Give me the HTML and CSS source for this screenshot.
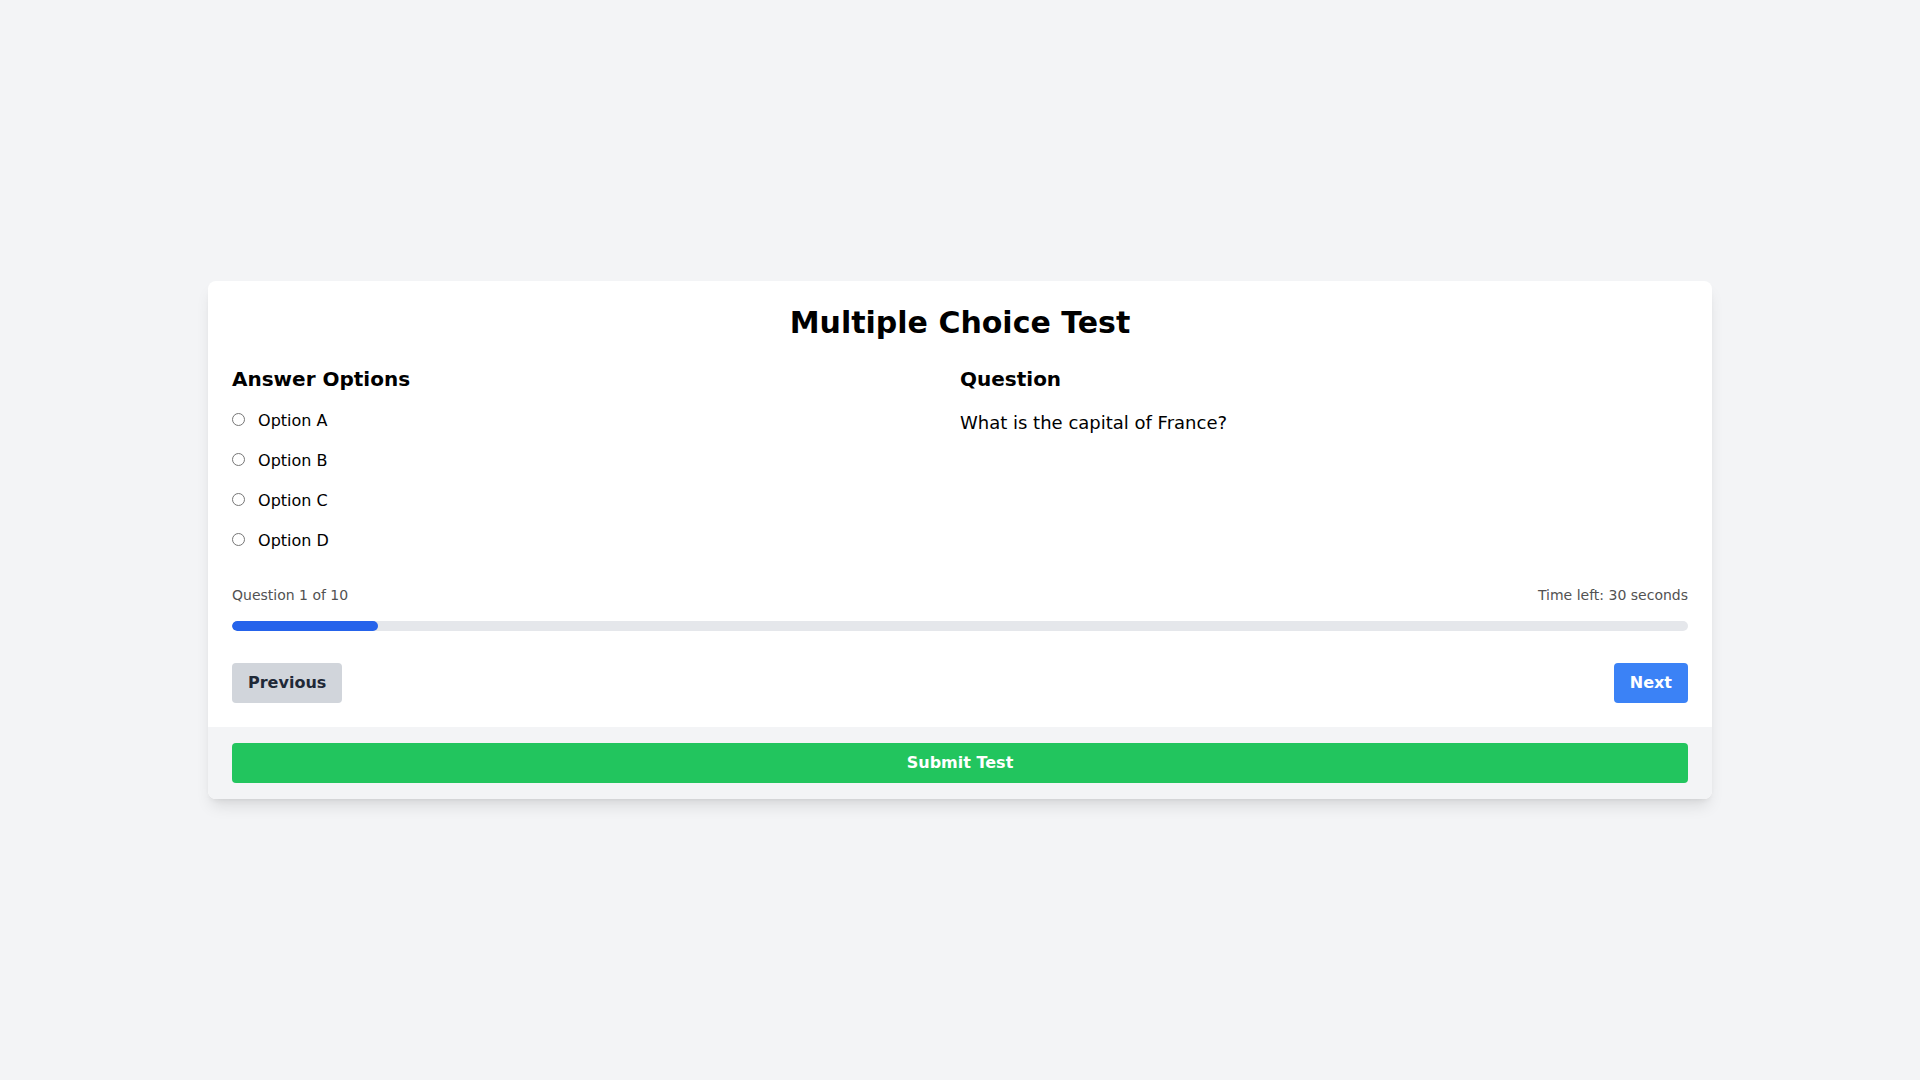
FILE: index.html
```html
<!DOCTYPE html>
<html lang="en">
<head>
<meta charset="utf-8">
<title>Multiple Choice Test</title>
<link rel="stylesheet" href="styles.css">
</head>
<body>
<div class="page">
  <div class="card">
    <div class="card-body">
      <h1 class="title">Multiple Choice Test</h1>
      <div class="columns">
        <div class="col">
          <h2 class="col-heading">Answer Options</h2>
          <div class="options">
            <label class="option"><input type="radio" name="answer" class="radio"> <span class="option-text">Option A</span></label>
            <label class="option"><input type="radio" name="answer" class="radio"> <span class="option-text">Option B</span></label>
            <label class="option"><input type="radio" name="answer" class="radio"> <span class="option-text">Option C</span></label>
            <label class="option"><input type="radio" name="answer" class="radio"> <span class="option-text">Option D</span></label>
          </div>
        </div>
        <div class="col">
          <h2 class="col-heading">Question</h2>
          <p class="question">What is the capital of France?</p>
        </div>
      </div>
      <div class="status">
        <span>Question 1 of 10</span>
        <span>Time left: 30 seconds</span>
      </div>
      <div class="progress"><div class="progress-fill" style="width: 10%"></div></div>
      <div class="nav">
        <button class="btn btn-prev">Previous</button>
        <button class="btn btn-next">Next</button>
      </div>
    </div>
    <div class="card-footer">
      <button class="btn btn-submit">Submit Test</button>
    </div>
  </div>
</div>
</body>
</html>
```
FILE: styles.css
```css
* { box-sizing: border-box; }
html, body { margin: 0; padding: 0; }
body {
  background: #f3f4f6;
  font-family: "DejaVu Sans", "Liberation Sans", sans-serif;
  color: #000;
}
.page {
  min-height: 100vh;
  display: flex;
  align-items: center;
  justify-content: center;
}
.card {
  width: 1504px;
  background: #fff;
  border-radius: 8px;
  box-shadow: 0 10px 15px -3px rgba(0,0,0,0.1), 0 4px 6px -4px rgba(0,0,0,0.1);
  overflow: hidden;
}
.card-body { padding: 24px; }
.title {
  margin: 0 0 24px;
  font-size: 30px;
  line-height: 36px;
  font-weight: 700;
  text-align: center;
}
.columns { display: flex; }
.col { width: 50%; }
.col-heading {
  margin: 0 0 16px;
  font-size: 20px;
  line-height: 28px;
  font-weight: 700;
}
.options { display: flex; flex-direction: column; gap: 16px; }
.option {
  display: block;
  font-size: 16px;
  line-height: 24px;
}
.radio {
  margin: 0;
  width: 13px;
  height: 13px;
}
.option-text { margin-left: 8px; }
.question {
  margin: 0;
  font-size: 18px;
  line-height: 28px;
}
.status {
  margin-top: 32px;
  display: flex;
  justify-content: space-between;
  font-size: 14px;
  line-height: 20px;
  color: #525252;
}
.progress {
  margin-top: 16px;
  height: 10px;
  background: #e5e7eb;
  border-radius: 9999px;
  overflow: hidden;
}
.progress-fill {
  height: 100%;
  background: #2563eb;
  border-radius: 9999px;
}
.nav {
  margin-top: 32px;
  display: flex;
  justify-content: space-between;
}
.btn {
  border: 0;
  font-family: inherit;
  font-size: 16px;
  line-height: 24px;
  font-weight: 700;
  padding: 8px 16px;
  border-radius: 4px;
  cursor: pointer;
}
.btn-prev { background: #d1d5db; color: #1f2937; }
.btn-next { background: #3b82f6; color: #fff; }
.card-footer {
  background: #f3f4f6;
  padding: 16px 24px;
}
.btn-submit {
  display: block;
  width: 100%;
  background: #22c55e;
  color: #fff;
}
```
